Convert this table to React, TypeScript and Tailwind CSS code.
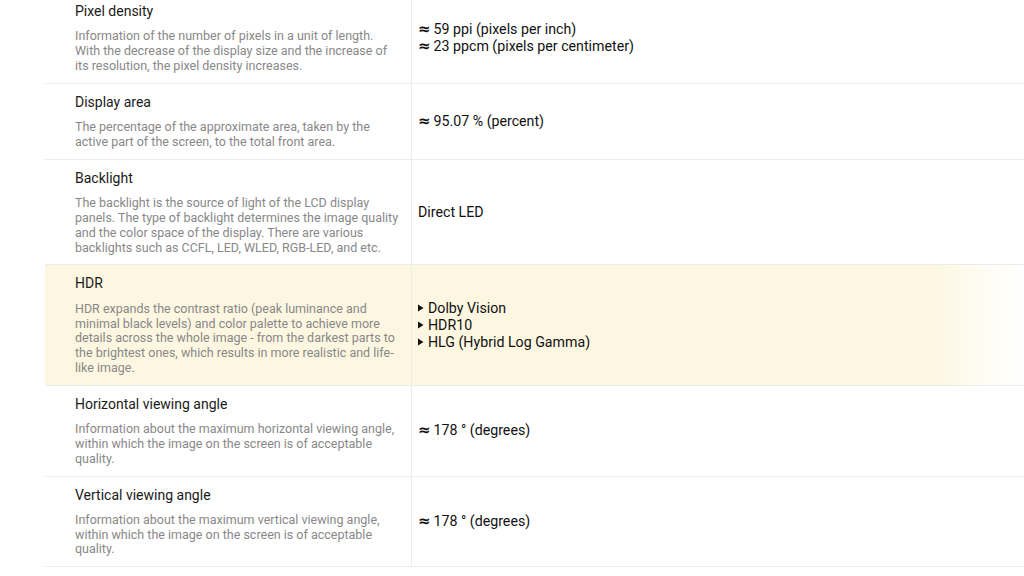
import React from "react";

type Row = { title: string; desc: string; values: string[]; list?: boolean; hl?: boolean };

const rows: Row[] = [
  {
    title: "Pixel density",
    desc: "Information of the number of pixels in a unit of length. With the decrease of the display size and the increase of its resolution, the pixel density increases.",
    values: ["59 ppi (pixels per inch)", "23 ppcm (pixels per centimeter)"],
  },
  {
    title: "Display area",
    desc: "The percentage of the approximate area, taken by the active part of the screen, to the total front area.",
    values: ["95.07 % (percent)"],
  },
  {
    title: "Backlight",
    desc: "The backlight is the source of light of the LCD display panels. The type of backlight determines the image quality and the color space of the display. There are various backlights such as CCFL, LED, WLED, RGB-LED, and etc.",
    values: ["Direct LED"],
  },
  {
    title: "HDR",
    desc: "HDR expands the contrast ratio (peak luminance and minimal black levels) and color palette to achieve more details across the whole image - from the darkest parts to the brightest ones, which results in more realistic and life-like image.",
    values: ["Dolby Vision", "HDR10", "HLG (Hybrid Log Gamma)"],
    list: true,
    hl: true,
  },
  {
    title: "Horizontal viewing angle",
    desc: "Information about the maximum horizontal viewing angle, within which the image on the screen is of acceptable quality.",
    values: ["178 ° (degrees)"],
  },
  {
    title: "Vertical viewing angle",
    desc: "Information about the maximum vertical viewing angle, within which the image on the screen is of acceptable quality.",
    values: ["178 ° (degrees)"],
  },
];

const approx = new Set([0, 1, 4, 5]);

export default function App() {
  return (
    <div
      className="w-[1024px] h-[576px] overflow-hidden bg-white"
      style={{ fontFamily: "Roboto, 'Liberation Sans', sans-serif" }}
    >
      <div className="ml-[45px] mt-[-7px]">
        {rows.map((r, i) => (
          <div
            key={i}
            className={
              "grid grid-cols-[366px_1fr] border-b border-[#ececec] " +
              (r.hl ? "bg-[linear-gradient(to_right,#fdf7e1_90%,#ffffff_100%)]" : "")
            }
          >
            <div className="pl-[30px] pr-[12px] pt-[10px] pb-[9px]">
              <div className="text-[14px] leading-[16px] text-[#1a1a1a]">{r.title}</div>
              <div className="mt-[10.4px] text-[12.5px] leading-[14.8px] text-[#888]">{r.desc}</div>
            </div>
            <div className="border-l border-[#ececec] pl-[6px] flex flex-col justify-center text-[14.2px] leading-[17px] text-[#111]">
              {r.values.map((v, j) =>
                r.list ? (
                  <div key={j} className="flex items-center">
                    <svg width="6" height="8" viewBox="0 0 6 8" className="mr-[4px]">
                      <path d="M0 0.5 L5.5 4 L0 7.5 Z" fill="#111" />
                    </svg>
                    <span>{v}</span>
                  </div>
                ) : (
                  <div key={j}>
                    {approx.has(i) && (
                      <span
                        style={{ fontFamily: "'DejaVu Sans', sans-serif" }}
                        className="mr-[3px] text-[15px] leading-[17px] font-bold"
                      >
                        ≈
                      </span>
                    )}
                    {v}
                  </div>
                )
              )}
            </div>
          </div>
        ))}
      </div>
    </div>
  );
}
